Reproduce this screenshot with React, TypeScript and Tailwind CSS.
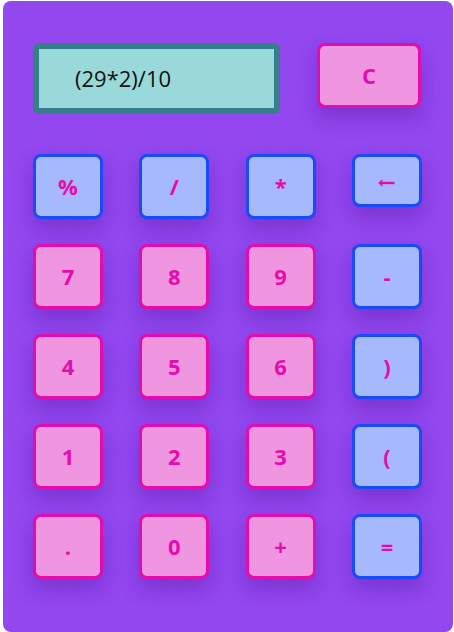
const pink = "bg-[#f095e0] border-[#e50cae]";
const blue = "bg-[#a5b9fc] border-[#1a4cf6]";

type Key = { label: string; tone: "pink" | "blue"; short?: boolean };

const keys: Key[] = [
  { label: "%", tone: "blue" },
  { label: "/", tone: "blue" },
  { label: "*", tone: "blue" },
  { label: "←", tone: "blue", short: true },
  { label: "7", tone: "pink" },
  { label: "8", tone: "pink" },
  { label: "9", tone: "pink" },
  { label: "-", tone: "blue" },
  { label: "4", tone: "pink" },
  { label: "5", tone: "pink" },
  { label: "6", tone: "pink" },
  { label: ")", tone: "blue" },
  { label: "1", tone: "pink" },
  { label: "2", tone: "pink" },
  { label: "3", tone: "pink" },
  { label: "(", tone: "blue" },
  { label: ".", tone: "pink" },
  { label: "0", tone: "pink" },
  { label: "+", tone: "pink" },
  { label: "=", tone: "blue" },
];

// backspace arrow: thick shaft, small head
function BackArrow() {
  return (
    <svg width="17" height="8" viewBox="0 0 17 8" aria-label="←" className="mt-[5px]">
      <path d="M2 4H16.5" stroke="#e50cac" strokeWidth="2.4" />
      <path d="M4.5 1L1.2 4L4.5 7" fill="none" stroke="#e50cac" strokeWidth="1.4" />
    </svg>
  );
}

function CalcKey({ k }: { k: Key }) {
  return (
    <button
      className={`flex w-[70px] items-center justify-center self-start rounded-lg border-[3px] text-[22px] font-bold text-[#e50cac] shadow-[0_10px_20px_rgba(70,10,140,0.32)] ${
        k.short ? "h-[53px]" : "h-[65px]"
      } ${k.tone === "pink" ? pink : blue}`}
    >
      {k.short ? <BackArrow /> : k.label}
    </button>
  );
}

export default function App() {
  return (
    <div className="min-h-screen bg-white pt-px pl-[3px] font-['Open_Sans',sans-serif]">
      <div className="h-[631px] w-[450px] rounded-lg bg-[#9247ef] pt-[42px] pr-[31px] pl-[30px]">
        <div className="flex items-start justify-between">
          <div className="flex h-[71px] w-[247px] items-center rounded-md border-[6px] border-[#377e8b] bg-[#99d9d9] pl-[36px] text-[22px] text-[#111]">
            (29*2)/10
          </div>
          <button
            className={`mr-px flex h-[65px] w-[104px] items-center justify-center rounded-lg border-[3px] text-[22px] font-bold text-[#e50cac] shadow-[0_10px_20px_rgba(70,10,140,0.32)] ${pink}`}
          >
            C
          </button>
        </div>
        <div className="mt-[40px] grid grid-cols-[repeat(4,70px)] justify-between gap-y-[25px]">
          {keys.map((k) => (
            <CalcKey key={k.label} k={k} />
          ))}
        </div>
      </div>
    </div>
  );
}
